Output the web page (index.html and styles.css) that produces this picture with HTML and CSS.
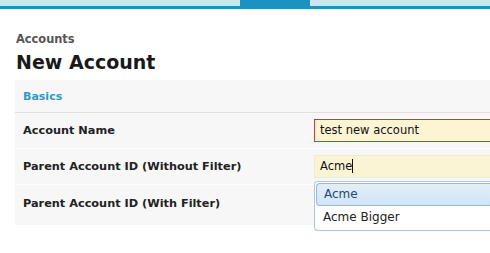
FILE: index.html
```html
<!DOCTYPE html>
<html>
<head>
<meta charset="utf-8">
<link rel="stylesheet" href="styles.css">
</head>
<body>
<div class="topbar"><div class="tab"></div></div>
<div class="page">
  <div class="crumb">Accounts</div>
  <h1 class="title">New Account</h1>
  <div class="panel">
    <div class="panel-head">Basics</div>
    <div class="row">
      <div class="label">Account Name</div>
      <div class="field"><div class="input error">test new account</div></div>
    </div>
    <div class="row">
      <div class="label">Parent Account ID (Without Filter)</div>
      <div class="field">
        <div class="input focus">Acme<span class="caret"></span></div>
        <ul class="menu">
          <li class="item active">Acme</li>
          <li class="item">Acme Bigger</li>
        </ul>
      </div>
    </div>
    <div class="row last">
      <div class="label">Parent Account ID (With Filter)</div>
      <div class="field"></div>
    </div>
  </div>
</div>
</body>
</html>
```
FILE: styles.css
```css
html { margin: 0; padding: 0; background: #fff; overflow: hidden; }
body { margin: 0; padding: 0; min-height: 253px; font-family: "DejaVu Sans", Verdana, sans-serif; color: #222; }
.topbar { height: 6px; background: #cde5ef; border-bottom: 3px solid #1b92c1; position: relative; }
.tab { position: absolute; left: 240px; top: 0; width: 70px; height: 6px; background: #1b92c1; }
.page { padding: 23px 0 0 15px; }
.crumb { font-size: 11.4px; font-weight: bold; color: #555; line-height: 14px; padding-left: 1px; }
.title { margin: 3px 0 0 0; font-size: 19px; font-weight: bold; color: #1a1a1a; line-height: 27px; padding-left: 1px; }
.panel { margin-top: 4px; background: #f7f7f7; padding-bottom: 4px; }
.panel-head { height: 32px; line-height: 34px; padding-left: 8px; font-size: 11px; font-weight: bold; color: #2b9bc6; border-bottom: 1px solid #e0e0e0; }
.row { display: grid; grid-template-columns: 299px 1fr; align-items: center; height: 35px; border-bottom: 1px solid #fdfdfd; }
.row.last { border-bottom: none; height: 36px; }
.label { padding-left: 8px; font-size: 11.3px; font-weight: bold; color: #222; }
.field { position: relative; height: 100%; display: flex; align-items: center; }
.input { box-sizing: border-box; height: 23px; width: 100%; line-height: 21px; padding-left: 5px; font-size: 11.5px; color: #111; background: #fbf4d4; border: 1px solid #f4ecc9; border-right: none; }
.input.error { border-color: #c93a3a; background: #fcf4d2; }
.caret { display: inline-block; width: 1px; height: 14px; background: #111; vertical-align: -3px; }
.menu { position: absolute; left: 0; right: 0; top: 32px; margin: 0; padding: 1px 0 1px 1px; list-style: none; background: #fff; border: 1px solid #a9c7e0; border-right: none; border-radius: 4px 0 0 4px; }
.item { height: 23px; line-height: 23px; padding-left: 7px; font-size: 12px; color: #222; }
.item.active { background: linear-gradient(#e3eef8, #d3e4f4); border: 1px solid #93badd; border-right: none; border-radius: 4px 0 0 4px; line-height: 21px; box-sizing: border-box; color: #234a6e; }
```
